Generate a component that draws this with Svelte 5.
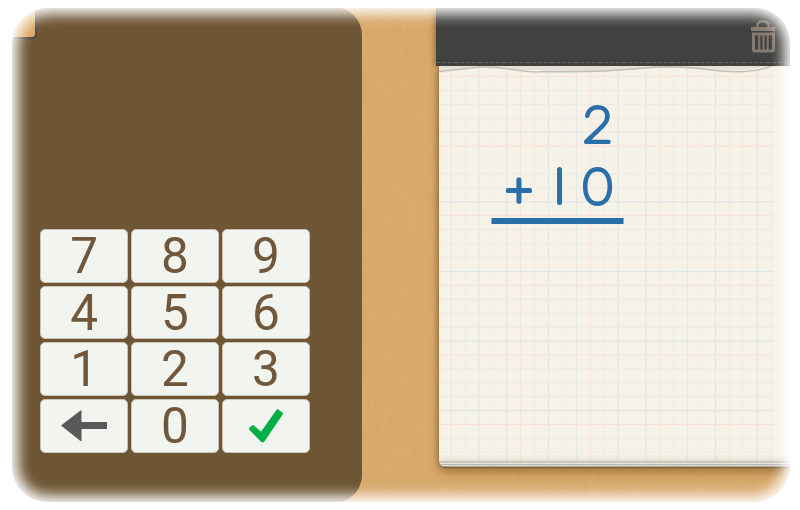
<script>
  const keys = ['7', '8', '9', '4', '5', '6', '1', '2', '3', 'back', '0', 'ok'];
  const step = 13.92;
  const columns = Array.from({ length: 24 }, (_, i) => ({ pos: 12 + i * step, pink: i % 5 === 0, strong: i % 5 === 2 || i % 5 === 4 }));
  const rows = Array.from({ length: 28 }, (_, i) => ({ pos: 10.5 + i * step, pink: i % 5 === 0, strong: i % 5 === 4 }));
</script>

<main class="stage">
  <svg class="grain" width="780" height="497" aria-hidden="true">
    <filter id="wood" x="0" y="0" width="100%" height="100%">
      <feTurbulence type="fractalNoise" baseFrequency="0.2 0.03" numOctaves="4" seed="4" />
      <feColorMatrix values="0 0 0 0 0.48  0 0 0 0 0.28  0 0 0 0 0.08  0.7 0 0 0 -0.23" />
    </filter>
    <rect width="780" height="497" filter="url(#wood)" />
  </svg>

  <section class="board">
    <div class="corner"></div>
    <div class="keypad">
      {#each keys as key}
        <button class="key" aria-label={key}>
          {#if key === 'back'}
            <svg width="48" height="32" viewBox="0 0 48 32"><path d="M1 15.5 20.5.5q1-.7 1 .5v10.900H47v7.200H21.500v11.400q0 1.200-1 .5Z" fill="#595958" /></svg>
          {:else if key === 'ok'}
            <svg width="36" height="34" viewBox="0 0 36 34"><path d="M1 20.500Q.7 19 2 18L4.600 16.200Q5.300 15.900 6 16.500L13 22.800 28.600.8Q29.300 0 30.300.6L34.600 3.800Q35.200 4.500 34.600 5.500L16.400 32.500Q14.500 34.300 12.800 32.400Z" fill="#00b045" /></svg>
          {:else}
            {key}
          {/if}
        </button>
      {/each}
    </div>
  </section>

  <section class="pad">
    <header class="binding">
      <svg class="trash" width="26" height="34" viewBox="0 0 26 34" fill="none" stroke="#857a70">
        <path d="M7.500 8V5L10 2.500h6L18.500 5V8" stroke-width="2.200" />
        <path d="M1 10h24" stroke-width="4" />
        <path d="M3.500 15h20v15.500q0 1.500-1.500 1.500H5q-1.500 0-1.500-1.500Z" stroke-width="3" />
        <path d="M9.300 16v15M13.500 16v15M17.700 16v15" stroke-width="2" />
      </svg>
    </header>
    <div class="paper">
      <svg class="sheet" width="351" height="395" viewBox="0 0 351 395">
        <clipPath id="stem"><rect x="118" y="101" width="5" height="38" rx="2.500" /></clipPath>
        <rect width="351" height="395" fill="#f6f2e8" />
        {#each columns as c}
          <path d="M{c.pos} 0V395" stroke={c.pink ? '#fbe2d9' : c.strong ? '#dce6e7' : '#ebeee8'} stroke-width="1" />
        {/each}
        {#each rows as r}
          <path d="M0 {r.pos}H335" stroke={r.pink ? '#fbe2d9' : r.strong ? '#dce6e7' : '#e7ece7'} stroke-width="1" />
        {/each}
        <path d="M0 0H351V1Q338-1 320 2T273 3Q235-1 196 3T73 3Q48-1 0 5Z" fill="#e3e1da" />
        <path d="M0 5.500Q22 3 36 1.500T73 3.500 104 5.500Q150 7 206 2 236-1 273 4T333 0" fill="none" stroke="#c4c0b7" stroke-width="1.500" />
        <g class="sum">
          <text transform="translate(158.500 75.800) scale(1.060 1)" text-anchor="middle">2</text>
          <text transform="translate(80 139.500)" text-anchor="middle" class="plus">+</text>
          <g clip-path="url(#stem)"><text class="one" x="127.500" y="139" text-anchor="end">1</text></g>
          <text transform="translate(158.500 137.500) scale(1.040 1)" text-anchor="middle">0</text>
        </g>
        <rect x="52.500" y="152" width="132" height="6" fill="#2b6faa" />
      </svg>
    </div>
    <div class="pages"></div>
  </section>
</main>

<style>
  :global(body) { margin: 0; background: #fff; overflow: hidden; }
  .stage {
    position: relative;
    display: flex;
    align-items: flex-start;
    width: 780px;
    height: 496px;
    margin: 7px 0 0 11px;
    overflow: hidden;
    background: #d9aa6c;
  }
  .stage::before {
    content: '';
    position: absolute;
    inset: 1px;
    z-index: 6;
    border-radius: 35px;
    box-shadow: 0 0 0 40px #fff;
    pointer-events: none;
  }
  .stage::after {
    content: '';
    position: absolute;
    inset: -20px;
    z-index: 5;
    border-radius: 57px;
    box-shadow: inset 0 0 14px 27px #fff;
    pointer-events: none;
  }
  .grain { position: absolute; inset: 0; opacity: .3; }
  .board {
    position: relative;
    box-sizing: border-box;
    width: 351px;
    height: 496px;
    padding: 222px 0 0 29px;
    border-radius: 0 28px 28px 0;
    background: rgba(104, 80, 50, .95);
  }
  .corner {
    position: absolute;
    left: -10px;
    top: -9px;
    width: 34px;
    height: 39px;
    border: solid #4b4a43;
    border-width: 0 2px 2px 0;
    border-radius: 0 0 5px 0;
    background: #dea55e;
  }
  .keypad {
    display: grid;
    grid-template-columns: repeat(3, 88.200px);
    grid-auto-rows: 53.900px;
    gap: 2.700px;
  }
  .key {
    display: flex;
    align-items: center;
    justify-content: center;
    box-sizing: border-box;
    padding: 0;
    border: 1px solid #c8c4b8;
    border-radius: 5px;
    background: #f1f4ef;
    color: #71573b;
    font: 49.500px/54px Roboto, sans-serif;
  }
  .pad {
    position: relative;
    width: 354px;
    margin-left: 74px;
  }
  .binding {
    display: flex;
    justify-content: flex-end;
    box-sizing: border-box;
    height: 59px;
    padding: 12px 14px 0 0;
    background: repeating-linear-gradient(90deg, #62625f 0 4px, #41413f 4px 6px) 0 55px / 100% 1px no-repeat, #41413f;
    box-shadow: -2px 0 5px rgba(100, 62, 15, .5);
  }
  .paper {
    height: 395px;
    margin-left: 3px;
    box-shadow: -1px 3px 7px rgba(103, 65, 19, .75);
  }
  .sheet { display: block; }
  .sum text {
    fill: #2b6faa;
    stroke: #2b6faa;
    stroke-width: 3.800px;
    stroke-linejoin: round;
    font: 100 49px Lato, sans-serif;
  }
  .sum .plus { font: 100 54px Inter, sans-serif; }
  .sum .one { font: 100 51px Inter, sans-serif; stroke-width: 5px; }
  .pages {
    position: relative;
    height: 6px;
    margin-left: 3px;
    border-radius: 0 0 0 6px;
    background: linear-gradient(#c9c6bd 0 2px, #e8e5dc 2px 3px, #bab7ae 3px 4px, #dedbd2 4px 5px, #aaa79e 5px);
    box-shadow: 0 1px 1px #76613f, 0 4px 10px rgba(103, 65, 19, .7);
  }
</style>
